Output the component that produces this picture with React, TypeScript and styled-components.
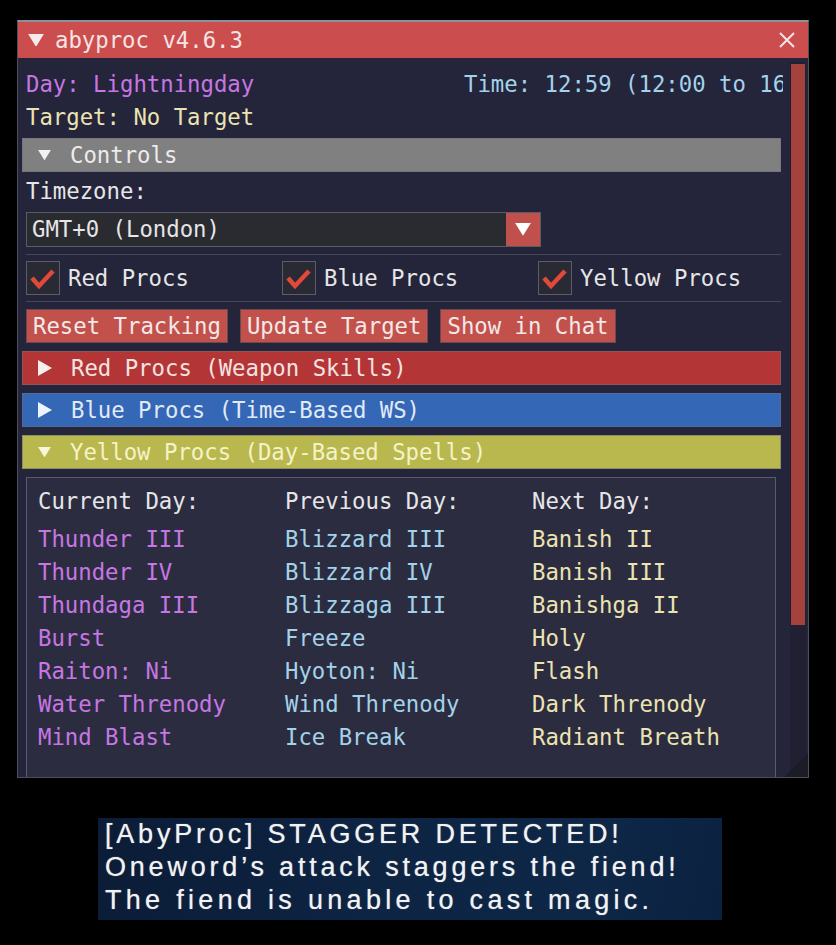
import React from "react";
import styled, { createGlobalStyle } from "styled-components";

const Global = createGlobalStyle`
  html, body { margin: 0; padding: 0; background: #000; }
  body { font-family: "DejaVu Sans Mono", "Liberation Mono", monospace; }
`;

const Page = styled.div`
  width: 836px;
  height: 945px;
  box-sizing: border-box;
  padding: 20px 0 0 17px;
  background: #000;
  display: flex;
  flex-direction: column;
  overflow: hidden;
`;

const Win = styled.div`
  width: 792px;
  height: 758px;
  box-sizing: border-box;
  background: #24243a;
  border: 1px solid #4e4e5a;
  border-top: 2px solid #8b909c;
  display: flex;
  flex-direction: column;
  position: relative;
  overflow: hidden;
  font-size: 22.3px;
`;

const TitleBar = styled.div`
  height: 36px;
  flex: none;
  background: #cc4d4d;
  display: flex;
  align-items: center;
  padding: 0 12px 0 10px;
  color: #f4e4e4;
`;

const TitleText = styled.span`
  margin-left: 11px;
  flex: 1;
  white-space: nowrap;
`;

const Body = styled.div`
  flex: 1;
  min-height: 0;
  display: flex;
`;

const Content = styled.div`
  flex: 1;
  min-width: 0;
  padding: 12px 14px 0 8px;
  display: flex;
  flex-direction: column;
`;

const ScrollTrack = styled.div`
  width: 16px;
  margin: 4px 2px 0 0;
  background: #202032;
  display: flex;
  flex-direction: column;
`;

const ScrollGrab = styled.div`
  height: 561px;
  margin: 2px 1px 0;
  background: #a4433e;
`;

const Line = styled.div<{ $color: string; $mt?: number }>`
  height: 28px;
  line-height: 28px;
  margin-top: ${(p) => p.$mt ?? 0}px;
  color: ${(p) => p.$color};
  white-space: nowrap;
  flex: none;
`;

const TopRow = styled.div`
  display: grid;
  grid-template-columns: 438px 1fr;
  margin-right: -7px;
  height: 28px;
  line-height: 28px;
  overflow: hidden;
  white-space: nowrap;
  flex: none;
`;

const Tinted = styled.span<{ $color: string }>`
  color: ${(p) => p.$color};
  overflow: hidden;
`;

const tones: Record<string, { bg: string; fg: string }> = {
  gray: { bg: "#808080", fg: "#ececec" },
  red: { bg: "#b43535", fg: "#f3e2e2" },
  blue: { bg: "#3467b6", fg: "#e2eaf6" },
  yellow: { bg: "#b8b84e", fg: "#f6f2c8" },
};

const Header = styled.div<{ $tone: string; $mt: number }>`
  height: 34px;
  flex: none;
  box-sizing: border-box;
  margin: ${(p) => p.$mt}px -5px 0 -4px;
  padding-left: 16px;
  display: flex;
  align-items: center;
  gap: 19px;
  background: ${(p) => tones[p.$tone].bg};
  color: ${(p) => tones[p.$tone].fg};
  box-shadow: inset 0 0 0 1px rgba(110, 110, 120, 0.55);
  white-space: nowrap;
`;

const Combo = styled.div`
  margin-top: 7px;
  width: 515px;
  height: 35px;
  display: flex;
  flex: none;
`;

const ComboField = styled.div`
  flex: 1;
  box-sizing: border-box;
  background: #2a2b31;
  border: 1px solid #5b5b63;
  border-right: none;
  padding-left: 5px;
  line-height: 33px;
  color: #e6e6e6;
`;

const ComboButton = styled.div`
  width: 34px;
  background: #c0504c;
  border: 1px solid #5b5b63;
  border-left: none;
  display: flex;
  align-items: center;
  justify-content: center;
`;

const Separator = styled.div<{ $mt: number }>`
  height: 1px;
  flex: none;
  margin: ${(p) => p.$mt}px -5px 0 0;
  background: #464659;
`;

const CheckRow = styled.div`
  margin-top: 6px;
  height: 34px;
  display: grid;
  grid-template-columns: repeat(3, 256px);
  flex: none;
`;

const CheckItem = styled.label`
  display: flex;
  align-items: center;
  gap: 8px;
  color: #e6e6e6;
  white-space: nowrap;
`;

const CheckBox = styled.span`
  width: 34px;
  height: 34px;
  box-sizing: border-box;
  background: #2a2a35;
  border: 1px solid #5d5d66;
  display: flex;
  align-items: center;
  justify-content: center;
`;

const ButtonRow = styled.div`
  margin-top: 7px;
  display: flex;
  gap: 12px;
  flex: none;
`;

const Button = styled.button`
  height: 34px;
  box-sizing: border-box;
  padding: 0 6px;
  background: #c2514c;
  border: 1px solid #6a4a50;
  color: #f3e8e8;
  font: inherit;
  line-height: 30px;
`;

const Child = styled.div`
  margin-top: 8px;
  flex: 1;
  min-height: 0;
  box-sizing: border-box;
  background: #2c2c40;
  border: 1px solid #5a5a68;
  border-bottom: none;
  padding: 9px 0 0 11px;
  overflow: hidden;
`;

const Table = styled.div`
  display: grid;
  grid-template-columns: repeat(3, 247px);
  grid-template-rows: 36px;
  grid-auto-rows: 33px;
  line-height: 33px;
`;

const ColHead = styled.div`
  color: #e6e6e8;
  line-height: 28px;
  white-space: nowrap;
`;

const Cell = styled.div<{ $color: string }>`
  color: ${(p) => p.$color};
  white-space: nowrap;
`;

const Grip = styled.svg`
  position: absolute;
  right: 0;
  bottom: 0;
`;

const Chat = styled.div`
  margin: 40px 0 0 81px;
  width: 624px;
  height: 102px;
  box-sizing: border-box;
  padding-left: 7px;
  background: linear-gradient(100deg, #0b1c36 0%, #0d2443 45%, #0e2747 80%, #0b2140 100%);
  overflow: hidden;
  font-family: "Liberation Sans", Arial, sans-serif;
  font-size: 27px;
  letter-spacing: 3.8px;
  line-height: 33px;
  color: #f2f2f2;
  text-shadow: 0 0 1px rgba(255, 255, 255, 0.6);
  white-space: nowrap;
`;

const WideLine = styled.div`
  letter-spacing: 4.3px;
`;

const Down = ({ size = 16, color = "#f0f0f0" }: { size?: number; color?: string }) => (
  <svg width={size} height={size * 0.8} viewBox="0 0 16 13">
    <polygon points="0,0 16,0 8,13" fill={color} />
  </svg>
);

const Right = ({ color = "#f0f0f0" }: { color?: string }) => (
  <svg width="14" height="16" viewBox="0 0 14 16">
    <polygon points="0,0 14,8 0,16" fill={color} />
  </svg>
);

const Check = () => (
  <svg width="30" height="30" viewBox="0 0 30 30">
    <polyline points="4,15 11,23 25,8" fill="none" stroke="#e2483c" strokeWidth="4.5" />
  </svg>
);

const PURPLE = "#c677e4";
const BLUE = "#a2d3ea";
const CREAM = "#ebe3b2";

const rows: [string, string, string][] = [
  ["Thunder III", "Blizzard III", "Banish II"],
  ["Thunder IV", "Blizzard IV", "Banish III"],
  ["Thundaga III", "Blizzaga III", "Banishga II"],
  ["Burst", "Freeze", "Holy"],
  ["Raiton: Ni", "Hyoton: Ni", "Flash"],
  ["Water Threnody", "Wind Threnody", "Dark Threnody"],
  ["Mind Blast", "Ice Break", "Radiant Breath"],
];

export default function App() {
  return (
    <Page>
      <Global />
      <Win>
        <TitleBar>
          <Down size={16} color="#f6eaea" />
          <TitleText>abyproc v4.6.3</TitleText>
          <svg width="18" height="18" viewBox="0 0 18 18">
            <path d="M2 2 L16 16 M16 2 L2 16" stroke="#f4e4e4" strokeWidth="2" />
          </svg>
        </TitleBar>
        <Body>
          <Content>
            <TopRow>
              <Tinted $color={PURPLE}>Day: Lightningday</Tinted>
              <Tinted $color={BLUE}>Time: 12:59 (12:00 to 16:00)</Tinted>
            </TopRow>
            <Line $color={CREAM} $mt={5}>Target: No Target</Line>
            <Header $tone="gray" $mt={7}>
              <Down size={13} color="#f2f2f2" />
              <span>Controls</span>
            </Header>
            <Line $color="#e6e6e6" $mt={5}>Timezone:</Line>
            <Combo>
              <ComboField>GMT+0 (London)</ComboField>
              <ComboButton>
                <Down size={16} color="#ffffff" />
              </ComboButton>
            </Combo>
            <Separator $mt={7} />
            <CheckRow>
              <CheckItem>
                <CheckBox><Check /></CheckBox>
                Red Procs
              </CheckItem>
              <CheckItem>
                <CheckBox><Check /></CheckBox>
                Blue Procs
              </CheckItem>
              <CheckItem>
                <CheckBox><Check /></CheckBox>
                Yellow Procs
              </CheckItem>
            </CheckRow>
            <Separator $mt={6} />
            <ButtonRow>
              <Button>Reset Tracking</Button>
              <Button>Update Target</Button>
              <Button>Show in Chat</Button>
            </ButtonRow>
            <Header $tone="red" $mt={8}>
              <Right color="#f8eeee" />
              <span>Red Procs (Weapon Skills)</span>
            </Header>
            <Header $tone="blue" $mt={8}>
              <Right color="#eef3fb" />
              <span>Blue Procs (Time-Based WS)</span>
            </Header>
            <Header $tone="yellow" $mt={8}>
              <Down size={13} color="#f8f5d8" />
              <span>Yellow Procs (Day-Based Spells)</span>
            </Header>
            <Child>
              <Table>
                <ColHead>Current Day:</ColHead>
                <ColHead>Previous Day:</ColHead>
                <ColHead>Next Day:</ColHead>
                {rows.map((r) => (
                  <React.Fragment key={r[0]}>
                    <Cell $color={PURPLE}>{r[0]}</Cell>
                    <Cell $color={BLUE}>{r[1]}</Cell>
                    <Cell $color={CREAM}>{r[2]}</Cell>
                  </React.Fragment>
                ))}
              </Table>
            </Child>
          </Content>
          <ScrollTrack>
            <ScrollGrab />
          </ScrollTrack>
        </Body>
        <Grip width="24" height="24" viewBox="0 0 24 24">
          <polygon points="24,0 24,24 0,24" fill="#1c1c26" />
        </Grip>
      </Win>
      <Chat>
        <div>[AbyProc] STAGGER DETECTED!</div>
        <div>Oneword’s attack staggers the fiend!</div>
        <WideLine>The fiend is unable to cast magic.</WideLine>
      </Chat>
    </Page>
  );
}
